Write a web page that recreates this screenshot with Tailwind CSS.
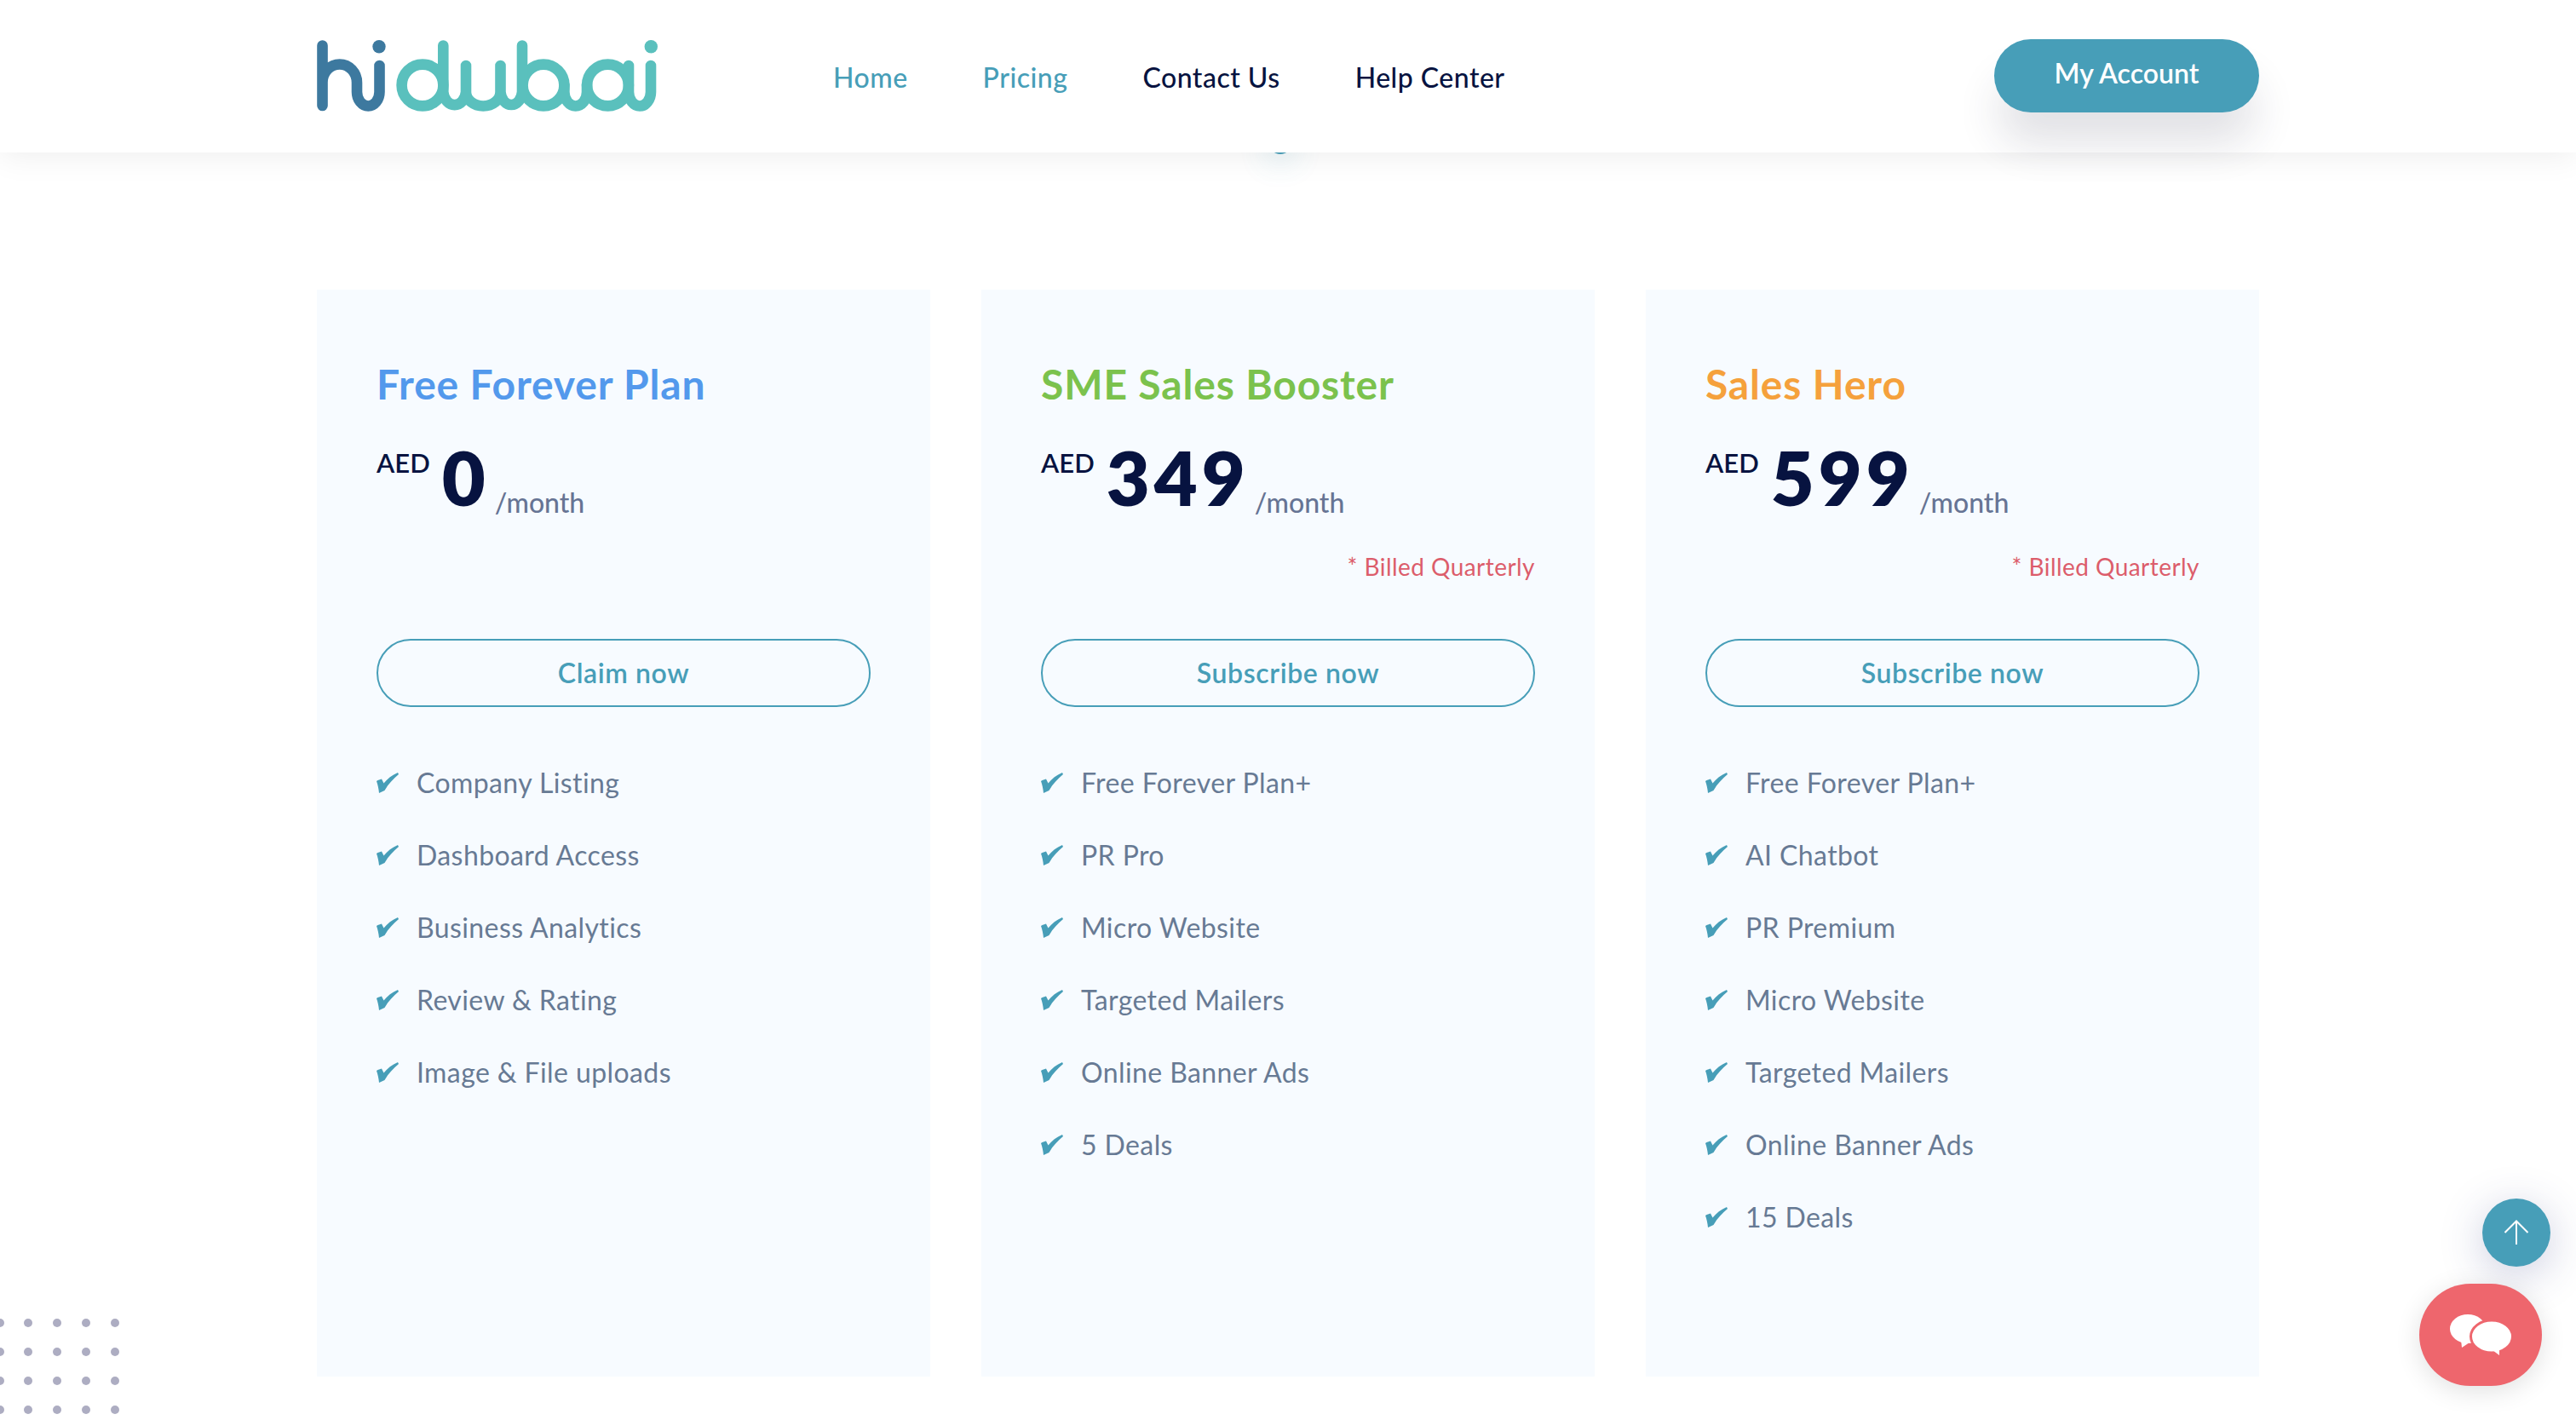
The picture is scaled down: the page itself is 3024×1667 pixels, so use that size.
<!DOCTYPE html>
<html lang="en">
<head>
  <meta charset="UTF-8">
  <title>hidubai Pricing</title>
  <script src="https://cdn.jsdelivr.net/npm/@tailwindcss/browser@4"></script>
</head>
<body class="relative h-[1667px] overflow-hidden bg-white font-[Lato,sans-serif]">

<!-- header -->
<header class="relative z-10 h-[179px] bg-white shadow-[0_4px_36px_rgba(0,0,0,0.07)]">
  <div class="mx-auto flex h-full w-[2280px] items-start">
    <svg class="mt-[44px] shrink-0" width="405" height="90" viewBox="32 44 405 90" fill="none" stroke-width="12.6" stroke-linecap="round">
      <g stroke="#3d799f">
        <path d="M38.5 53.5V124M38.5 97C38.5 84 48 75.5 58.7 75.5C70 75.5 79 85 79 97V108A13.25 16.5 0 0 0 105.5 108V77"/>
      </g>
      <circle cx="105" cy="54.7" r="7.7" fill="#3d799f"/>
      <g stroke="#5ac0bd">
        <circle cx="156" cy="100" r="24.4"/>
        <circle cx="298" cy="100" r="24.4"/>
        <circle cx="373.5" cy="100" r="24.4"/>
        <path d="M180.3 53.5V108A13.4 16.5 0 0 0 207 108V77M207 108A20.2 16.5 0 0 0 247.5 108V77M247.5 108A12.8 16.5 0 0 0 273 108V53.5M322.4 100V108A13.3 16.5 0 0 0 349 108V100M398 77V108A13 16.5 0 0 0 424 108V77"/>
      </g>
      <circle cx="424.3" cy="54.7" r="7.7" fill="#5ac0bd"/>
    </svg>
    <nav class="ml-[201px] mt-[72px] flex gap-[88px] text-[32px] leading-[38px] font-medium tracking-[0.5px]">
      <a class="text-[#479eb8]">Home</a>
      <a class="text-[#479eb8]">Pricing</a>
      <a class="text-[#071340]">Contact Us</a>
      <a class="text-[#071340]">Help Center</a>
    </nav>
    <a class="ml-auto mt-[46px] flex h-[86px] w-[311px] items-center justify-center rounded-full bg-[#479eb8] pb-[6px] text-[32px] font-semibold text-white shadow-[0_40px_50px_-4px_rgba(40,45,70,0.14)]">My Account</a>
  </div>
</header>
<div class="absolute left-[1490px] top-[155px] h-[26px] w-[26px] rounded-full bg-[#479eb8] shadow-[0_6px_36px_rgba(71,158,184,0.3)]"></div>

<!-- plans -->
<main class="mx-auto mt-[161px] grid w-[2280px] grid-cols-3 gap-[60px]">

  <section class="relative h-[1276px] bg-[#f7fbff] px-[70px] pt-[80px]">
    <h2 class="h-[58px] pt-[2px] text-[48px] leading-[58px] font-bold tracking-[0.85px] text-[#5399ec]">Free Forever Plan</h2>
    <div class="mt-[40px] flex h-[100px] items-start text-[#071340]">
      <span class="mt-[6px] text-[31px] leading-[38px] font-semibold">AED</span>
      <span class="ml-[14px] -mt-[8px] text-[88px] leading-[100px] font-extrabold tracking-[5px]">0</span>
      <span class="ml-[6px] mt-[53px] text-[32px] leading-[38px] font-medium text-[#667494]">/month</span>
    </div>
    <p class="mt-[30px] h-[34px] text-right text-[28px] leading-[34px] tracking-[0.45px] text-[#dc5d6b]">&nbsp;</p>
    <a class="mt-[68px] flex h-[80px] items-center justify-center rounded-full border-2 border-[#479eb8] text-[32px] font-semibold tracking-[0.6px] text-[#479eb8]">Claim now</a>
    <ul class="mt-[46px] text-[32px] tracking-[0.4px] text-[#677a94]">
      <li class="flex h-[85px] items-center gap-[21px]"><svg class="shrink-0" width="26" height="24" viewBox="0 0 26 24" fill="#479eb8"><path d="M0 10C2 8.500 4 8 6 7.500L8.500 12.500C13 7 18 3 25 0L26 2C20 7 14 13 9.500 21L3 24C2.500 19 1.500 14 0 10Z"/></svg>Company Listing</li>
      <li class="flex h-[85px] items-center gap-[21px]"><svg class="shrink-0" width="26" height="24" viewBox="0 0 26 24" fill="#479eb8"><path d="M0 10C2 8.500 4 8 6 7.500L8.500 12.500C13 7 18 3 25 0L26 2C20 7 14 13 9.500 21L3 24C2.500 19 1.500 14 0 10Z"/></svg>Dashboard Access</li>
      <li class="flex h-[85px] items-center gap-[21px]"><svg class="shrink-0" width="26" height="24" viewBox="0 0 26 24" fill="#479eb8"><path d="M0 10C2 8.500 4 8 6 7.500L8.500 12.500C13 7 18 3 25 0L26 2C20 7 14 13 9.500 21L3 24C2.500 19 1.500 14 0 10Z"/></svg>Business Analytics</li>
      <li class="flex h-[85px] items-center gap-[21px]"><svg class="shrink-0" width="26" height="24" viewBox="0 0 26 24" fill="#479eb8"><path d="M0 10C2 8.500 4 8 6 7.500L8.500 12.500C13 7 18 3 25 0L26 2C20 7 14 13 9.500 21L3 24C2.500 19 1.500 14 0 10Z"/></svg>Review &amp; Rating</li>
      <li class="flex h-[85px] items-center gap-[21px]"><svg class="shrink-0" width="26" height="24" viewBox="0 0 26 24" fill="#479eb8"><path d="M0 10C2 8.500 4 8 6 7.500L8.500 12.500C13 7 18 3 25 0L26 2C20 7 14 13 9.500 21L3 24C2.500 19 1.500 14 0 10Z"/></svg>Image &amp; File uploads</li>
    </ul>
  </section>

  <section class="relative h-[1276px] bg-[#f7fbff] px-[70px] pt-[80px]">
    <h2 class="h-[58px] pt-[2px] text-[48px] leading-[58px] font-bold tracking-[0.85px] text-[#7bc24d]">SME Sales Booster</h2>
    <div class="mt-[40px] flex h-[100px] items-start text-[#071340]">
      <span class="mt-[6px] text-[31px] leading-[38px] font-semibold">AED</span>
      <span class="ml-[14px] -mt-[8px] text-[88px] leading-[100px] font-extrabold tracking-[5px]">349</span>
      <span class="ml-[6px] mt-[53px] text-[32px] leading-[38px] font-medium text-[#667494]">/month</span>
    </div>
    <p class="mt-[30px] h-[34px] text-right text-[28px] leading-[34px] tracking-[0.45px] text-[#dc5d6b]">* Billed Quarterly</p>
    <a class="mt-[68px] flex h-[80px] items-center justify-center rounded-full border-2 border-[#479eb8] text-[32px] font-semibold tracking-[0.6px] text-[#479eb8]">Subscribe now</a>
    <ul class="mt-[46px] text-[32px] tracking-[0.4px] text-[#677a94]">
      <li class="flex h-[85px] items-center gap-[21px]"><svg class="shrink-0" width="26" height="24" viewBox="0 0 26 24" fill="#479eb8"><path d="M0 10C2 8.500 4 8 6 7.500L8.500 12.500C13 7 18 3 25 0L26 2C20 7 14 13 9.500 21L3 24C2.500 19 1.500 14 0 10Z"/></svg>Free Forever Plan+</li>
      <li class="flex h-[85px] items-center gap-[21px]"><svg class="shrink-0" width="26" height="24" viewBox="0 0 26 24" fill="#479eb8"><path d="M0 10C2 8.500 4 8 6 7.500L8.500 12.500C13 7 18 3 25 0L26 2C20 7 14 13 9.500 21L3 24C2.500 19 1.500 14 0 10Z"/></svg>PR Pro</li>
      <li class="flex h-[85px] items-center gap-[21px]"><svg class="shrink-0" width="26" height="24" viewBox="0 0 26 24" fill="#479eb8"><path d="M0 10C2 8.500 4 8 6 7.500L8.500 12.500C13 7 18 3 25 0L26 2C20 7 14 13 9.500 21L3 24C2.500 19 1.500 14 0 10Z"/></svg>Micro Website</li>
      <li class="flex h-[85px] items-center gap-[21px]"><svg class="shrink-0" width="26" height="24" viewBox="0 0 26 24" fill="#479eb8"><path d="M0 10C2 8.500 4 8 6 7.500L8.500 12.500C13 7 18 3 25 0L26 2C20 7 14 13 9.500 21L3 24C2.500 19 1.500 14 0 10Z"/></svg>Targeted Mailers</li>
      <li class="flex h-[85px] items-center gap-[21px]"><svg class="shrink-0" width="26" height="24" viewBox="0 0 26 24" fill="#479eb8"><path d="M0 10C2 8.500 4 8 6 7.500L8.500 12.500C13 7 18 3 25 0L26 2C20 7 14 13 9.500 21L3 24C2.500 19 1.500 14 0 10Z"/></svg>Online Banner Ads</li>
      <li class="flex h-[85px] items-center gap-[21px]"><svg class="shrink-0" width="26" height="24" viewBox="0 0 26 24" fill="#479eb8"><path d="M0 10C2 8.500 4 8 6 7.500L8.500 12.500C13 7 18 3 25 0L26 2C20 7 14 13 9.500 21L3 24C2.500 19 1.500 14 0 10Z"/></svg>5 Deals</li>
    </ul>
  </section>

  <section class="relative h-[1276px] bg-[#f7fbff] px-[70px] pt-[80px]">
    <h2 class="h-[58px] pt-[2px] text-[48px] leading-[58px] font-bold tracking-[0.85px] text-[#f5a13c]">Sales Hero</h2>
    <div class="mt-[40px] flex h-[100px] items-start text-[#071340]">
      <span class="mt-[6px] text-[31px] leading-[38px] font-semibold">AED</span>
      <span class="ml-[14px] -mt-[8px] text-[88px] leading-[100px] font-extrabold tracking-[5px]">599</span>
      <span class="ml-[6px] mt-[53px] text-[32px] leading-[38px] font-medium text-[#667494]">/month</span>
    </div>
    <p class="mt-[30px] h-[34px] text-right text-[28px] leading-[34px] tracking-[0.45px] text-[#dc5d6b]">* Billed Quarterly</p>
    <a class="mt-[68px] flex h-[80px] items-center justify-center rounded-full border-2 border-[#479eb8] text-[32px] font-semibold tracking-[0.6px] text-[#479eb8]">Subscribe now</a>
    <ul class="mt-[46px] text-[32px] tracking-[0.4px] text-[#677a94]">
      <li class="flex h-[85px] items-center gap-[21px]"><svg class="shrink-0" width="26" height="24" viewBox="0 0 26 24" fill="#479eb8"><path d="M0 10C2 8.500 4 8 6 7.500L8.500 12.500C13 7 18 3 25 0L26 2C20 7 14 13 9.500 21L3 24C2.500 19 1.500 14 0 10Z"/></svg>Free Forever Plan+</li>
      <li class="flex h-[85px] items-center gap-[21px]"><svg class="shrink-0" width="26" height="24" viewBox="0 0 26 24" fill="#479eb8"><path d="M0 10C2 8.500 4 8 6 7.500L8.500 12.500C13 7 18 3 25 0L26 2C20 7 14 13 9.500 21L3 24C2.500 19 1.500 14 0 10Z"/></svg>AI Chatbot</li>
      <li class="flex h-[85px] items-center gap-[21px]"><svg class="shrink-0" width="26" height="24" viewBox="0 0 26 24" fill="#479eb8"><path d="M0 10C2 8.500 4 8 6 7.500L8.500 12.500C13 7 18 3 25 0L26 2C20 7 14 13 9.500 21L3 24C2.500 19 1.500 14 0 10Z"/></svg>PR Premium</li>
      <li class="flex h-[85px] items-center gap-[21px]"><svg class="shrink-0" width="26" height="24" viewBox="0 0 26 24" fill="#479eb8"><path d="M0 10C2 8.500 4 8 6 7.500L8.500 12.500C13 7 18 3 25 0L26 2C20 7 14 13 9.500 21L3 24C2.500 19 1.500 14 0 10Z"/></svg>Micro Website</li>
      <li class="flex h-[85px] items-center gap-[21px]"><svg class="shrink-0" width="26" height="24" viewBox="0 0 26 24" fill="#479eb8"><path d="M0 10C2 8.500 4 8 6 7.500L8.500 12.500C13 7 18 3 25 0L26 2C20 7 14 13 9.500 21L3 24C2.500 19 1.500 14 0 10Z"/></svg>Targeted Mailers</li>
      <li class="flex h-[85px] items-center gap-[21px]"><svg class="shrink-0" width="26" height="24" viewBox="0 0 26 24" fill="#479eb8"><path d="M0 10C2 8.500 4 8 6 7.500L8.500 12.500C13 7 18 3 25 0L26 2C20 7 14 13 9.500 21L3 24C2.500 19 1.500 14 0 10Z"/></svg>Online Banner Ads</li>
      <li class="flex h-[85px] items-center gap-[21px]"><svg class="shrink-0" width="26" height="24" viewBox="0 0 26 24" fill="#479eb8"><path d="M0 10C2 8.500 4 8 6 7.500L8.500 12.500C13 7 18 3 25 0L26 2C20 7 14 13 9.500 21L3 24C2.500 19 1.500 14 0 10Z"/></svg>15 Deals</li>
    </ul>
  </section>
</main>

<!-- dot pattern, bottom left -->
<svg class="absolute bottom-0 left-0" width="142" height="120" viewBox="0 0 142 120" fill="#adadc2">
  <circle cx="0" cy="6" r="5"/><circle cx="33" cy="6" r="5"/><circle cx="67" cy="6" r="5"/><circle cx="101" cy="6" r="5"/><circle cx="135" cy="6" r="5"/>
  <circle cx="0" cy="40" r="5"/><circle cx="33" cy="40" r="5"/><circle cx="67" cy="40" r="5"/><circle cx="101" cy="40" r="5"/><circle cx="135" cy="40" r="5"/>
  <circle cx="0" cy="74" r="5"/><circle cx="33" cy="74" r="5"/><circle cx="67" cy="74" r="5"/><circle cx="101" cy="74" r="5"/><circle cx="135" cy="74" r="5"/>
  <circle cx="0" cy="108" r="5"/><circle cx="33" cy="108" r="5"/><circle cx="67" cy="108" r="5"/><circle cx="101" cy="108" r="5"/><circle cx="135" cy="108" r="5"/>
</svg>

<!-- floating buttons -->
<a class="absolute left-[2914px] top-[1407px] flex h-[80px] w-[80px] items-center justify-center rounded-full bg-[#479eb8] shadow-[0_10px_50px_rgba(50,60,130,0.25)]">
  <svg width="30" height="30" viewBox="0 0 30 30" fill="none" stroke="#fff" stroke-width="2"><path d="M15 1V29M1.5 15L15 1.5L28.500 15"/></svg>
</a>
<a class="absolute left-[2840px] top-[1507px] flex h-[120px] w-[144px] items-center justify-center rounded-[60px] bg-[#ee666d] shadow-[0_6px_30px_rgba(0,0,0,0.12)]">
  <svg width="72" height="48" viewBox="0 0 72 48" fill="#fff">
    <ellipse cx="21" cy="17" rx="21" ry="17"/>
    <path d="M13 30L14 39L23 33Z"/>
    <ellipse cx="49" cy="26" rx="24.500" ry="19" stroke="#ee666d" stroke-width="3"/>
    <path d="M50 42L58 48L58 40Z"/>
  </svg>
</a>
</body>
</html>
